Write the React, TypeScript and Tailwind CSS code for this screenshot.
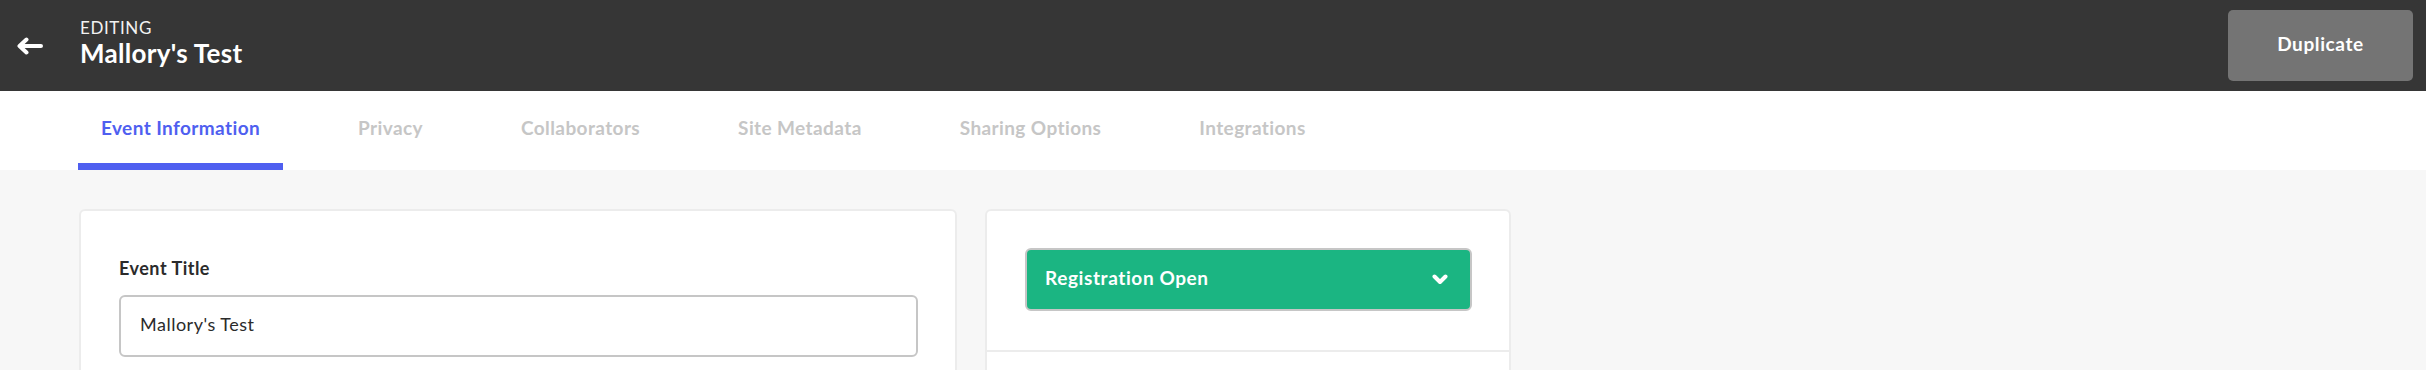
import { useState } from 'react';

const TABS = ['Event Information', 'Privacy', 'Collaborators', 'Site Metadata', 'Sharing Options', 'Integrations'];

function BackArrow() {
    return (
        <svg width="27" height="18" viewBox="0 0 27 18" fill="none">
            <path d="M25 9H4M10.5 2.5L3.5 9L10.5 15.5" stroke="white" strokeWidth="4" strokeLinecap="round" strokeLinejoin="round" />
        </svg>
    );
}

function Chevron() {
    return (
        <svg width="16" height="11" viewBox="0 0 16 11" fill="none">
            <path d="M2.5 2.5L8 8L13.5 2.5" stroke="white" strokeWidth="4" strokeLinecap="round" strokeLinejoin="round" />
        </svg>
    );
}

export default function App() {
    const [active, setActive] = useState(0);
    const [title, setTitle] = useState("Mallory's Test");

    return (
        <div className="min-h-screen bg-[#f7f7f7]" style={{ fontFamily: 'Lato, "Open Sans", sans-serif' }}>
            {/* Header */}
            <div className="h-[91px] bg-[#363636] flex items-center pr-[13px]">
                <button className="w-[80px] h-full flex items-center pl-[16px]">
                    <BackArrow />
                </button>
                <div className="flex flex-col -mt-[4px]">
                    <span className="text-[17px] leading-[20px] text-[#f2f2f2] tracking-[0.6px]">EDITING</span>
                    <span className="text-[26px] leading-[31px] font-bold text-white tracking-[0.3px]">Mallory's Test</span>
                </div>
                <button className="ml-auto w-[185px] h-[71px] pb-[3px] rounded-[5px] bg-[#747474] text-white text-[19px] font-bold tracking-[0.6px]">
                    Duplicate
                </button>
            </div>

            {/* Tabs */}
            <div className="h-[79px] bg-white flex pl-[78px] gap-[52px]">
                {TABS.map((tab, i) => (
                    <button
                        key={tab}
                        onClick={() => setActive(i)}
                        className={`px-[23px] pt-[2px] h-full flex items-center border-b-[7px] text-[19px] font-bold tracking-[0.4px] ${
                            active === i ? 'border-[#4f5ff0] text-[#4f5ff0]' : 'border-transparent text-[#c6c6c6]'
                        }`}
                    >
                        {tab}
                    </button>
                ))}
            </div>

            {/* Body */}
            <div className="flex items-start gap-[28px] pl-[79px] pt-[39px]">
                <div className="w-[878px] h-[400px] bg-white border-2 border-[#ececec] rounded-[6px] px-[38px] pt-[46px]">
                    <label className="block text-[18px] leading-[22px] font-bold text-[#2b2b2b] tracking-[0.5px]">Event Title</label>
                    <input
                        value={title}
                        onChange={e => setTitle(e.target.value)}
                        className="mt-[16px] w-[799px] h-[62px] border-2 border-[#c6c6c6] rounded-[6px] px-[19px] pb-[5px] text-[18px] text-[#2b2b2b] tracking-[0.5px] outline-none"
                    />
                </div>

                <div className="w-[526px] h-[400px] bg-white border-2 border-[#ececec] rounded-[6px]">
                    <div className="px-[38px] pt-[37px] pb-[39px] border-b-2 border-[#ececec]">
                        <button className="w-[447px] h-[63px] rounded-[6px] bg-[#1bb582] border-2 border-[#c6c6c6] flex items-center justify-between pl-[18px] pr-[22px]">
                            <span className="text-[19px] font-bold text-white tracking-[0.6px] -mt-[2px]">Registration Open</span>
                            <Chevron />
                        </button>
                    </div>
                </div>
            </div>
        </div>
    );
}
